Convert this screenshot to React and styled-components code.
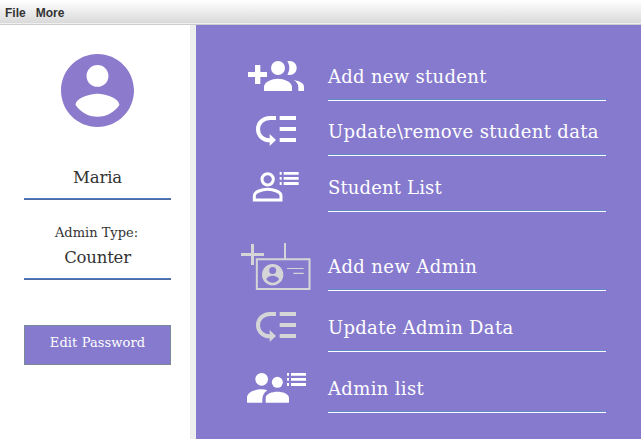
import React from "react";
import styled, { createGlobalStyle } from "styled-components";

const GlobalStyle = createGlobalStyle`
  * { box-sizing: border-box; }
  body { margin: 0; overflow: hidden; }
`;

const Window = styled.div`
  display: flex;
  flex-direction: column;
  width: 641px;
  height: 439px;
  background: #fff;
  color: #333;
  font-family: "DejaVu Serif", serif;
`;

const MenuBar = styled.nav`
  display: flex;
  gap: 10px;
  height: 25px;
  flex: none;
  padding-left: 5px;
  border-bottom: 1px solid #ccc;
  background: linear-gradient(#fff, #dadada 23px, #eee 23px);
  font: bold 12px/26px "Liberation Sans", Arial, sans-serif;
`;

const MenuItem = styled.span`
  white-space: nowrap;
`;

const Content = styled.div`
  display: flex;
  flex: 1;
  min-height: 0;
`;

const Sidebar = styled.aside`
  display: flex;
  flex-direction: column;
  width: 196px;
  padding: 29px 19px 0 24px;
  border-right: 6px solid #eee;
`;

const Avatar = styled.svg`
  display: block;
  width: 73px;
  height: 73px;
  margin-left: 37px;
`;

const Field = styled.div`
  height: ${(p) => p.$height}px;
  margin-top: ${(p) => p.$gap}px;
  border-bottom: 1px solid #4f6a9c;
  box-shadow: inset 0 -1px #4f7ac6;
  text-align: center;
  white-space: nowrap;
`;

const Label = styled.div`
  margin-bottom: -1px;
  font-size: 13px;
  line-height: 22px;
  padding-right: 2px;
`;

const Value = styled.div`
  font-size: 16.5px;
  line-height: 29px;
  letter-spacing: ${(p) => p.$spacing}px;
`;

const EditButton = styled.button`
  width: 147px;
  height: 40px;
  margin-top: 45px;
  padding: 0 0 5px;
  border: 1px solid #7a8a99;
  background: #867ace;
  color: #fff;
  font: 13px "DejaVu Serif", serif;
  letter-spacing: 0.1px;
`;

const Actions = styled.main`
  flex: 1;
  padding-top: 21px;
  background: #867ace;
  color: #fff;
`;

const Group = styled.section`
  margin-bottom: 18px;
`;

const ActionRow = styled.div`
  display: grid;
  grid-template-columns: 132px 278px;
  height: ${(p) => p.$height}px;
`;

const Icon = styled.svg`
  display: block;
  width: 80px;
  height: ${(p) => p.$height}px;
  margin: ${(p) => p.$top}px 0 0 39px;
  fill: currentColor;
  color: ${(p) => (p.$muted ? "#d5d5d8" : "#fff")};
`;

const ActionLabel = styled.div`
  display: flex;
  align-items: flex-end;
  padding-bottom: 10px;
  border-bottom: 1px solid #fff;
  box-shadow: inset 0 -1px #6688c8;
  font-size: 18px;
  line-height: 26px;
  letter-spacing: ${(p) => p.$spacing}px;
  white-space: nowrap;
`;

const ListLines = ({ x, y }) => (
  <g transform={`translate(${x} ${y})`}>
    <path d="M0 0h6v8H0zM12 0h45v8H12zM0 15h6v8H0zM12 15h45v8H12zM0 30h6v9H0zM12 30h45v9H12z" />
  </g>
);

const LowPriority = () => (
  <>
    <path
      d="M123 39H105C84 39 69 54 69 73s15 33 36 33"
      fill="none"
      stroke="currentColor"
      strokeWidth="12"
    />
    <path d="M104 87l19 18-19 18zM134 33h49v12h-49zM134 66h49v12h-49zM134 99h49v12h-49z" />
  </>
);

const AddPeople = () => (
  <>
    <path d="M60 45h16v21h20v15H76v21H60V81H39V66h21z" />
    <circle cx="129" cy="54" r="21" />
    <path d="M157 34c16-4 28 6 28 20s-12 24-28 20c8-12 8-28 0-40z" />
    <path d="M87 123v-12c0-16 25-25 42-25s42 9 42 25v12zM176 90c17 3 31 9 31 21v12h-17v-12c0-9-6-16-14-21z" />
  </>
);

const PersonList = () => (
  <>
    <circle cx="98" cy="58" r="17" fill="none" stroke="currentColor" strokeWidth="9" />
    <path
      d="M58 120v-13c0-12 23-19 40-19s40 7 40 19v13z"
      fill="none"
      stroke="currentColor"
      strokeWidth="9"
    />
    <ListLines x={134} y={36} />
  </>
);

const AddBadge = () => (
  <>
    <path d="M48 27h9v27h30v9H57v27h-9V63H18v-9h30zM147 24h6v48h-6z" />
    <path d="M65.500 73h158v89h-158z" fill="none" stroke="currentColor" strokeWidth="6" />
    <path d="M156 99h50v3h-50zM175 113h31v4h-31z" />
    <path
      fillRule="evenodd"
      d="M113 87a32 32 0 1 0 0 64 32 32 0 1 0 0-64zM113 96a10.500 10.500 0 1 1 0 21 10.500 10.500 0 1 1 0-21zM94 133c0-6 11-11 19-11s19 5 19 11c-8 14-30 14-38 0z"
    />
  </>
);

const PeopleList = () => (
  <>
    <circle cx="80" cy="58" r="19" />
    <circle cx="127" cy="67" r="16.500" />
    <path d="M36 128v-15c0-17 26-25 44-25 6 0 12 1 17 3-11 8-15 17-15 29v8zM92 128v-14c0-13 19-19 35-19s35 6 35 19v14z" />
    <ListLines x={156} y={39} />
  </>
);

const studentActions = [
  { label: "Add new student", icon: AddPeople, height: 55, iconHeight: 50, top: 4, spacing: 0.3 },
  { label: "Update\\remove student data", icon: LowPriority, height: 55, iconHeight: 50, top: 4, spacing: 0.36 },
  { label: "Student List", icon: PersonList, height: 56, iconHeight: 50, top: 4, spacing: 0.15 },
];

const adminActions = [
  { label: "Add new Admin", icon: AddBadge, height: 61, iconHeight: 55, top: 5, spacing: 0.4, muted: true },
  { label: "Update Admin Data", icon: LowPriority, height: 61, iconHeight: 50, top: 10, spacing: 0.3, muted: true },
  { label: "Admin list", icon: PeopleList, height: 61, iconHeight: 50, top: 8, spacing: 0.35 },
];

const ActionGroup = ({ actions }) => (
  <Group>
    {actions.map(({ label, icon: Glyph, height, iconHeight, top, spacing, muted }) => (
      <ActionRow key={label} $height={height}>
        <Icon viewBox={`0 0 240 ${iconHeight * 3}`} $height={iconHeight} $top={top} $muted={muted}>
          <Glyph />
        </Icon>
        <ActionLabel $spacing={spacing}>{label}</ActionLabel>
      </ActionRow>
    ))}
  </Group>
);

export default function App() {
  return (
    <>
      <GlobalStyle />
      <Window>
        <MenuBar>
          <MenuItem>File</MenuItem>
          <MenuItem>More</MenuItem>
        </MenuBar>
        <Content>
          <Sidebar>
            <Avatar viewBox="2 2 20 20" fill="#8c7acd">
              <path d="M12 2C6.480 2 2 6.480 2 12s4.480 10 10 10 10-4.480 10-10S17.520 2 12 2zm0 3c1.660 0 3 1.340 3 3s-1.340 3-3 3-3-1.340-3-3 1.340-3 3-3zm0 14.200c-2.500 0-4.710-1.280-6-3.220.030-1.990 4-3.080 6-3.080 1.990 0 5.970 1.090 6 3.080-1.290 1.940-3.500 3.220-6 3.220z" />
            </Avatar>
            <Field $height={37} $gap={36}>
              <Value $spacing={-0.1}>Maria</Value>
            </Field>
            <Field $height={58} $gap={22}>
              <Label>Admin Type:</Label>
              <Value $spacing={-0.2}>Counter</Value>
            </Field>
            <EditButton>Edit Password</EditButton>
          </Sidebar>
          <Actions>
            <ActionGroup actions={studentActions} />
            <ActionGroup actions={adminActions} />
          </Actions>
        </Content>
      </Window>
    </>
  );
}
